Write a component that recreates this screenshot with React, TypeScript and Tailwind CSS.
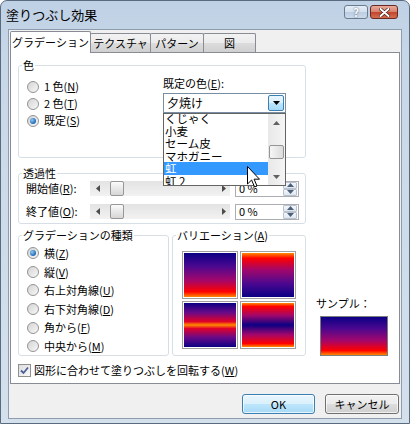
import type { ReactNode } from "react";

function Radio({ checked = false, children }: { checked?: boolean; children: ReactNode }) {
  return (
    <div className="flex items-center gap-[5px]">
      <span className="flex h-[12px] w-[12px] items-center justify-center rounded-full border border-[#939393] bg-[linear-gradient(135deg,#d4d4d4,#f7f7f7)]">
        {checked && (
          <span className="h-[6px] w-[6px] rounded-full bg-[radial-gradient(circle_at_35%_35%,#8cc9f2,#1f67b5_70%)]" />
        )}
      </span>
      <span>{children}</span>
    </div>
  );
}

function GroupBox({ label, className, children }: { label: ReactNode; className: string; children: ReactNode }) {
  return (
    <fieldset className={`rounded-[3px] border border-[#d5dfe5] ${className}`}>
      <legend className="ml-[3px] px-[1px] leading-[14px]">{label}</legend>
      {children}
    </fieldset>
  );
}

function Tri({ dir, className = "" }: { dir: "up" | "down" | "left" | "right"; className?: string }) {
  const pts = {
    up: "0,4 3.5,0 7,4",
    down: "0,0 7,0 3.5,4",
    left: "4,0 4,7 0,3.5",
    right: "0,0 0,7 4,3.5",
  }[dir];
  const vertical = dir === "up" || dir === "down";
  return (
    <svg width={vertical ? 7 : 4} height={vertical ? 4 : 7} className={className}>
      <polygon points={pts} fill="currentColor" />
    </svg>
  );
}

function Slider() {
  return (
    <div className="relative flex h-[15px] w-[140px] items-center bg-[linear-gradient(to_bottom,#e3e3e3,#f2f2f2)] text-[#4d4d4d]">
      <Tri dir="left" className="ml-[6px]" />
      <span className="ml-[10px] h-[15px] w-[14px] rounded-[2px] border border-[#979797] bg-[linear-gradient(to_bottom,#fbfbfb,#e8e8e8_50%,#d6d6d6)]" />
      <Tri dir="right" className="ml-auto mr-[4px]" />
    </div>
  );
}

function SpinBox() {
  return (
    <div className="ml-[5px] flex h-[16px] w-[64px] items-center border border-[#abadb3] bg-white">
      <span className="pl-[3px] text-[11px]">0 %</span>
      <div className="ml-auto mr-[1px] flex h-[14px] w-[14px] flex-col">
        <span className="flex h-[7px] items-center justify-center rounded-[1px] border border-[#b8c2cf] bg-[linear-gradient(to_bottom,#f4f7fb,#dfe6ef)] text-[#4c607a]">
          <Tri dir="up" />
        </span>
        <span className="flex h-[7px] items-center justify-center rounded-[1px] border border-[#b8c2cf] bg-[linear-gradient(to_bottom,#f4f7fb,#dfe6ef)] text-[#4c607a]">
          <Tri dir="down" />
        </span>
      </div>
    </div>
  );
}

function Tab({ label, active = false, w }: { label: string; active?: boolean; w: string }) {
  return active ? (
    <div className={`relative z-10 -mb-[1px] flex h-[22px] items-center justify-center rounded-t-[2px] border border-b-0 border-[#898c95] bg-white ${w}`}>
      {label}
    </div>
  ) : (
    <div className={`-ml-[1px] flex h-[19px] items-center justify-center rounded-t-[2px] border border-b-0 border-[#898c95] bg-[linear-gradient(to_bottom,#f2f2f2,#ebebeb_50%,#dddddd_50%,#cfcfcf)] ${w}`}>
      {label}
    </div>
  );
}

function DlgButton({ children, primary = false, w }: { children: ReactNode; primary?: boolean; w: string }) {
  return (
    <div
      className={`flex h-[20px] items-center justify-center rounded-[3px] border ${w} ${
        primary
          ? "border-[#3c7fb1] bg-[linear-gradient(to_bottom,#eaf6fd,#d9f0fc_50%,#bee6fd_50%,#a7d9f5)] shadow-[inset_0_0_0_1px_#ffffffb0]"
          : "border-[#707070] bg-[linear-gradient(to_bottom,#f2f2f2,#ebebeb_50%,#dddddd_50%,#cfcfcf)] shadow-[inset_0_0_0_1px_#ffffffb0]"
      }`}
    >
      {children}
    </div>
  );
}

const presets = ["くじゃく", "小麦", "セーム皮", "マホガニー", "虹", "虹 2"];

export default function App() {
  return (
    <div className="relative h-[424px] w-[410px] select-none overflow-hidden rounded-t-[7px] border border-[#5b6b7f] bg-[linear-gradient(to_bottom,#bfd1e5,#c8d7e8_60px,#d4e0ec)] font-['Noto_Sans_CJK_JP','Noto_Sans',sans-serif] text-[11px] text-black">
      {/* title bar */}
      <div className="flex h-[28px] items-start pl-[5px] pr-[11px]">
        <span className="mt-[5px] text-[13px] leading-[18px]">塗りつぶし効果</span>
        <div className="ml-auto mt-[4px] flex gap-[2px]">
          <div className="flex h-[14px] w-[24px] items-center justify-center rounded-[3px] border border-[#6b7b90] bg-[linear-gradient(to_bottom,#e6eef7,#d3e0ee_50%,#bccde2_50%,#cbd9ea)] text-[11px] font-bold leading-none text-white [text-shadow:0_0_2px_#3a4a60]">
            ?
          </div>
          <div className="flex h-[14px] w-[28px] items-center justify-center rounded-[3px] border border-[#6a2a22] bg-[linear-gradient(to_bottom,#e9a99b,#d6806c_50%,#c2432b_50%,#d46d50)]">
            <svg width="11" height="9" viewBox="0 0 11 9">
              <path d="M1.5 1 L9.5 8 M9.5 1 L1.5 8" stroke="#3b1510" strokeWidth="3.2" strokeLinecap="round" />
              <path d="M1.5 1 L9.5 8 M9.5 1 L1.5 8" stroke="#fff" strokeWidth="2" strokeLinecap="round" />
            </svg>
          </div>
        </div>
      </div>

      {/* client area */}
      <div className="ml-[7px] flex h-[390px] w-[394px] flex-col border border-[#8d9cae] bg-[#f0f0f0]">
        <div className="flex h-[22px] items-end pl-[1px]">
          <Tab label="グラデーション" active w="w-[81px]" />
          <Tab label="テクスチャ" w="w-[61px]" />
          <Tab label="パターン" w="w-[54px]" />
          <Tab label="図" w="w-[53px]" />
        </div>

        <div className="ml-[1px] flex h-[332px] w-[390px] flex-col border border-[#898c95] bg-white">
          {/* 色 */}
          <GroupBox label="色" className="ml-[7px] mt-[5px] h-[100px] w-[288px]">
            <div className="flex">
              <div className="flex w-[144px] flex-col pl-[8px] pt-[6px]">
                <div className="flex h-[17px] items-center">
                  <Radio>1 色(<u>N</u>)</Radio>
                </div>
                <div className="flex h-[17px] items-center">
                  <Radio>2 色(<u>T</u>)</Radio>
                </div>
                <div className="flex h-[17px] items-center">
                  <Radio checked>既定(<u>S</u>)</Radio>
                </div>
              </div>
              <div className="flex flex-col pt-[4px]">
                <span className="leading-[14px]">既定の色(<u>E</u>):</span>
                <div className="relative mt-[3px]">
                  <div className="flex h-[20px] w-[123px] items-center border border-[#7a8ea3] bg-white">
                    <span className="flex-1 pl-[3px] text-[12px]">夕焼け</span>
                    <span className="m-[1px] flex h-[16px] w-[16px] items-center justify-center rounded-[2px] border border-[#3c7fb1] bg-[linear-gradient(to_bottom,#eaf6fd,#d9f0fc_50%,#bee6fd_50%,#a7d9f5)] text-black">
                      <Tri dir="down" />
                    </span>
                  </div>
                  {/* open list */}
                  <div className="absolute left-0 top-full z-20 flex h-[73px] w-[123px] border border-[#646464] bg-white">
                    <div className="flex-1 overflow-hidden">
                      <div className="-mt-[2px]">
                        {presets.map((p) => (
                          <div
                            key={p}
                            className={`h-[12.5px] pl-[1px] text-[11.5px] leading-[12.5px] ${
                              p === "虹" ? "bg-[#3399ff] text-white" : ""
                            }`}
                          >
                            {p}
                          </div>
                        ))}
                      </div>
                    </div>
                    <div className="flex w-[17px] flex-col items-center bg-[linear-gradient(to_right,#e8e8e8,#f5f5f5)] text-[#606060]">
                      <div className="flex h-[17px] items-center">
                        <Tri dir="up" />
                      </div>
                      <div className="mt-[14px] h-[14px] w-[15px] rounded-[2px] border border-[#959595] bg-[linear-gradient(to_right,#f6f6f6,#dcdcdc)]" />
                      <div className="mt-auto flex h-[17px] items-center">
                        <Tri dir="down" />
                      </div>
                    </div>
                  </div>
                </div>
              </div>
            </div>
          </GroupBox>

          {/* 透過性 */}
          <GroupBox label="透過性" className="ml-[7px] mt-[8px] h-[58px] w-[288px]">
            <div className="flex flex-col gap-[6px] pl-[7px]">
              <div className="flex h-[17px] items-center">
                <span className="w-[64px]">開始値(<u>R</u>):</span>
                <Slider />
                <SpinBox />
              </div>
              <div className="flex h-[17px] items-center">
                <span className="w-[64px]">終了値(<u>O</u>):</span>
                <Slider />
                <SpinBox />
              </div>
            </div>
          </GroupBox>

          <div className="mt-[4px] flex h-[128px]">
            <GroupBox label="グラデーションの種類" className="ml-[7px] h-[128px] w-[151px]">
              <div className="flex flex-col pl-[8px] pt-[2px]">
                {[
                  <>横(<u>Z</u>)</>,
                  <>縦(<u>V</u>)</>,
                  <>右上対角線(<u>U</u>)</>,
                  <>右下対角線(<u>D</u>)</>,
                  <>角から(<u>F</u>)</>,
                  <>中央から(<u>M</u>)</>,
                ].map((t, i) => (
                  <div key={i} className="flex h-[18.6px] items-center">
                    <Radio checked={i === 0}>{t}</Radio>
                  </div>
                ))}
              </div>
            </GroupBox>

            <GroupBox label={<>バリエーション(<u>A</u>)</>} className="ml-[3px] h-[128px] w-[134px]">
              <div className="grid w-fit grid-cols-2 gap-[2px] pl-[9px] pt-[9px]">
                <div className="h-[48px] w-[56px] border border-[#a0a0a0] bg-white p-[1px]">
                  <div className="h-full w-full bg-[linear-gradient(to_bottom,#0b0084,#4a0890_30%,#a3076b_62%,#ff0000_88%,#ff8a00)]" />
                </div>
                <div className="h-[48px] w-[56px] border border-[#a0a0a0] bg-white p-[1px]">
                  <div className="h-full w-full bg-[linear-gradient(to_top,#0b0084,#4a0890_30%,#a3076b_62%,#ff0000_88%,#ff8a00)]" />
                </div>
                <div className="h-[48px] w-[56px] border border-[#a0a0a0] bg-white p-[1px]">
                  <div className="h-full w-full bg-[linear-gradient(to_bottom,#0b0084,#6a0a88_22%,#e0002a_42%,#ff8a00_50%,#e0002a_58%,#6a0a88_78%,#0b0084)]" />
                </div>
                <div className="h-[48px] w-[56px] border border-[#a0a0a0] bg-white p-[1px]">
                  <div className="h-full w-full bg-[linear-gradient(to_bottom,#ff8a00,#ff0000_8%,#a3076b_28%,#0b0084_50%,#a3076b_72%,#ff0000_92%,#ff8a00)]" />
                </div>
              </div>
            </GroupBox>

            <div className="ml-[10px] flex flex-col">
              <span className="mt-[68px] leading-[14px]">サンプル：</span>
              <div className="ml-[4px] mt-[6px] h-[58px] w-[68px] border border-[#7d7d7d] bg-[linear-gradient(to_bottom,#0b0084,#4a0890_30%,#a3076b_62%,#ff0000_88%,#ff8a00)]" />
            </div>
          </div>

          <div className="ml-[7px] mt-[7px] flex h-[14px] items-center gap-[3px]">
            <span className="flex h-[13px] w-[13px] items-center justify-center border border-[#8f8f8f] bg-[linear-gradient(135deg,#dcdcdc,#fafafa)]">
              <svg width="9" height="9" viewBox="0 0 9 9">
                <path d="M1 4.5 L3.5 7 L8 1.5" fill="none" stroke="#4a5f97" strokeWidth="1.8" />
              </svg>
            </span>
            <span>図形に合わせて塗りつぶしを回転する(<u>W</u>)</span>
          </div>
        </div>

        <div className="mt-[10px] flex justify-end gap-[10px] pr-[2px]">
          <DlgButton primary w="w-[73px]">OK</DlgButton>
          <DlgButton w="w-[74px]">キャンセル</DlgButton>
        </div>
      </div>

      {/* mouse pointer */}
      <svg className="absolute left-[246px] top-[165px] z-30" width="13" height="22" viewBox="0 0 13 22">
        <path d="M0.5 0.5 L0.5 18 L4.6 14 L7.6 21 L10 20 L7.1 13.2 L12.5 13.2 Z" fill="#fff" stroke="#000" strokeWidth="1" strokeLinejoin="round" />
      </svg>
    </div>
  );
}
